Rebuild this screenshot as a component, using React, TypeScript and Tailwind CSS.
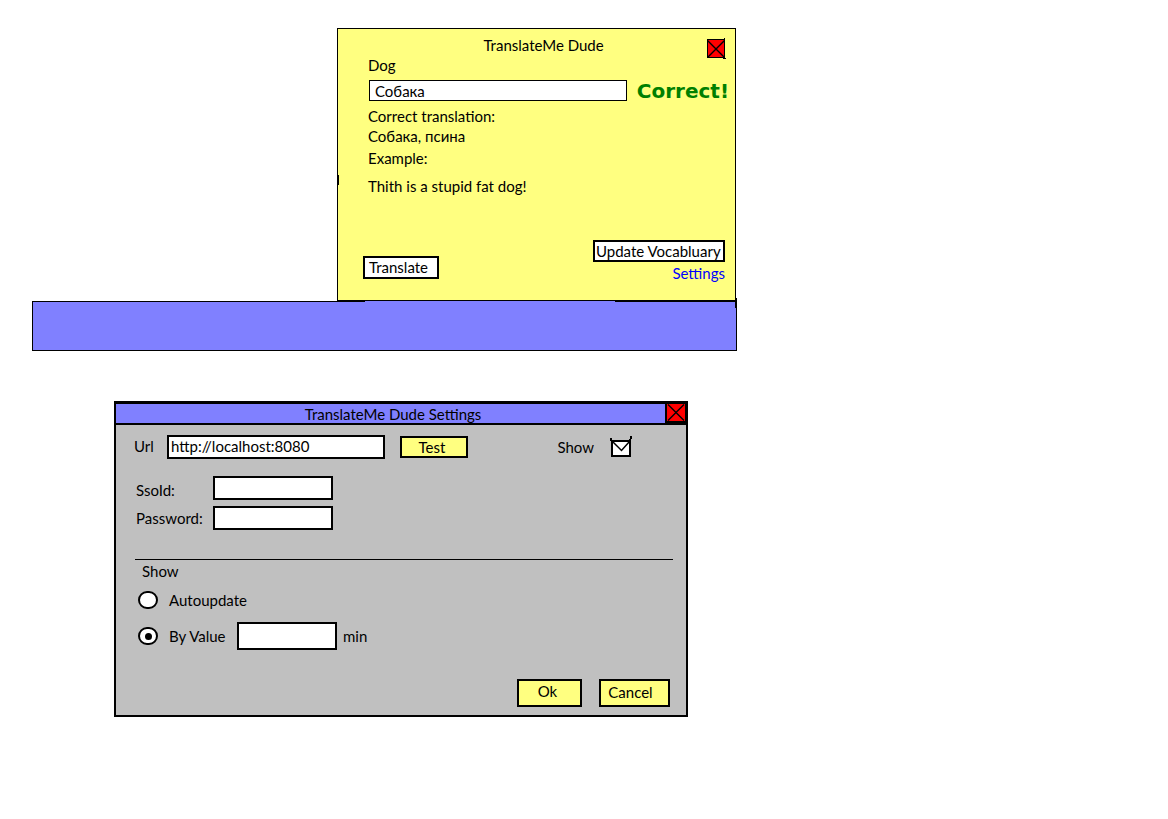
import { useState } from "react";
import type { ReactNode } from "react";

function CloseButton({ label, framed }: { label: string; framed?: boolean }) {
  return (
    <button type="button" aria-label={label} className="block shrink-0">
      {framed ? (
        <svg width="21" height="20" viewBox="0 0 21 20" className="block">
          <rect width="21" height="20" fill="#000" />
          <rect x="2" y="1" width="18" height="17" fill="#f00" />
          <path d="M3 1.5l16 16M19 1.5l-16 16" stroke="#000" strokeWidth="1.4" />
        </svg>
      ) : (
        <svg width="19" height="21" viewBox="0 0 19 21" className="block">
          <rect x="0.5" y="1.5" width="17" height="18" fill="#f00" stroke="#000" />
          <path d="M0.5 2.5l17 17M17.5 2.5l-17 17" stroke="#000" strokeWidth="1.4" />
          <path d="M17.5 0v21M16 20.5h3" stroke="#000" />
        </svg>
      )}
    </button>
  );
}

function Popup() {
  return (
    <section className="relative ml-auto flex w-full max-w-[399px] flex-col border border-black bg-[#ffff80] pt-[7px] pb-[18px]">
      <span className="absolute top-[146px] -left-px h-[10px] w-[2px] bg-black" />
      <header className="relative flex h-5 justify-center pl-[14px]">
        <h1>TranslateMe Dude</h1>
        <div className="absolute top-[2px] right-[9px]">
          <CloseButton label="Close" />
        </div>
      </header>
      <div className="flex flex-col pr-[6px] pl-[30px]">
        <label htmlFor="answer" className="h-6">
          Dog
        </label>
        <div className="flex items-center gap-[10px] pl-px">
          <input
            id="answer"
            defaultValue="Собака"
            className="h-[21px] min-w-0 flex-1 border border-black bg-white px-[5px] outline-none"
          />
          <output
            htmlFor="answer"
            className="font-['DejaVu_Sans',sans-serif] text-[20px] font-bold text-[#008000]"
          >
            Correct!
          </output>
        </div>
        <p className="mt-[6px]">Correct translation:</p>
        <p className="mt-[2px]">Собака, псина</p>
        <p className="mt-1">Example:</p>
        <p className="mt-[10px]">Thith is a stupid fat dog!</p>
      </div>
      <footer className="mt-[45px] flex items-center justify-between pr-[10px] pl-[25px]">
        <button
          type="button"
          className="mt-3 h-[23px] w-[76px] border-2 border-black bg-white px-1 text-left"
        >
          Translate
        </button>
        <div className="flex flex-col items-end gap-[2px]">
          <button
            type="button"
            className="h-[22px] w-[132px] border-2 border-black bg-white pl-px text-left whitespace-nowrap"
          >
            Update Vocabluary
          </button>
          <a href="#settings" className="text-[#0000ff]">
            Settings
          </a>
        </div>
      </footer>
    </section>
  );
}

function Taskbar() {
  return (
    <div className="relative h-[50px] border border-black bg-[#8080ff]">
      <span className="absolute -top-px right-[121px] h-px w-[250px] bg-[#8080ff]" />
      <span className="absolute -top-1 -right-px h-[10px] w-[2px] bg-black" />
    </div>
  );
}

function PanelButton({ className, children }: { className: string; children: ReactNode }) {
  return (
    <button type="button" className={`border-2 border-black bg-[#ffff80] ${className}`}>
      {children}
    </button>
  );
}

function ShowToggle() {
  return (
    <label className="flex items-center gap-4">
      Show
      <span className="relative block h-[22px] w-[22px]">
        <input type="checkbox" defaultChecked className="peer absolute inset-0 appearance-none" />
        <svg viewBox="0 0 22 22" className="pointer-events-none absolute inset-0 h-full w-full">
          <rect x="2" y="5" width="18" height="15" fill="#fff" stroke="#000" strokeWidth="2" />
        </svg>
        <svg
          viewBox="0 0 22 22"
          className="pointer-events-none invisible absolute inset-0 h-full w-full peer-checked:visible"
        >
          <path d="M2.5 5.5l9 9 8-9" fill="none" stroke="#000" strokeWidth="1.5" />
          <path d="M0 2h2v3h-2zM19 3h1v-3h2v3h-1v2h-2z" fill="#000" />
        </svg>
      </span>
    </label>
  );
}

function Radio({ id, checked, onSelect }: { id: string; checked: boolean; onSelect: () => void }) {
  return (
    <span className="relative block h-[18px] w-5">
      <input
        id={id}
        type="radio"
        name="mode"
        checked={checked}
        onChange={onSelect}
        className="peer absolute inset-0 appearance-none rounded-full border-2 border-black bg-white"
      />
      <span className="pointer-events-none invisible absolute top-[6px] left-[7px] size-[7px] rounded-full bg-black peer-checked:visible" />
    </span>
  );
}

function Settings() {
  const [mode, setMode] = useState("value");
  const field = "border-2 border-black bg-white px-[2px] outline-none";
  return (
    <section id="settings" className="w-full max-w-[574px] border-2 border-black bg-[#c0c0c0]">
      <header className="relative flex h-[22px] items-center justify-center border-t border-b-2 border-black bg-[#8080ff] pr-4">
        <h2>TranslateMe Dude Settings</h2>
        <div className="absolute -top-px right-0">
          <CloseButton label="Close settings" framed />
        </div>
      </header>
      <form className="px-[13px] pt-[10px] pb-2" onSubmit={(e) => e.preventDefault()}>
        <div className="flex items-center pr-[41px] pl-[5px]">
          <label htmlFor="url" className="w-[33px] pb-[2px]">
            Url
          </label>
          <input
            id="url"
            defaultValue="http://localhost:8080"
            className={`h-6 w-[218px] pb-[2px] ${field}`}
          />
          <PanelButton className="ml-[15px] h-[22px] w-[68px] pr-1">Test</PanelButton>
          <div className="ml-auto">
            <ShowToggle />
          </div>
        </div>
        <div className="mt-[17px] grid grid-cols-[77px_120px] items-center gap-y-[6px] pl-[7px]">
          <label htmlFor="sso" className="pt-1">
            SsoId:
          </label>
          <input id="sso" className={`h-6 ${field}`} />
          <label htmlFor="password">Password:</label>
          <input id="password" type="password" className={`h-6 ${field}`} />
        </div>
        <fieldset className="mt-[29px]">
          <div className="ml-[6px] border-t border-black pt-[2px] pl-[7px]">
            <legend>Show</legend>
          </div>
          <div className="mt-[11px] flex items-center gap-[11px] pl-[9px]">
            <Radio id="auto" checked={mode === "auto"} onSelect={() => setMode("auto")} />
            <label htmlFor="auto">Autoupdate</label>
          </div>
          <div className="mt-[13px] flex items-center pl-[9px]">
            <Radio id="value" checked={mode === "value"} onSelect={() => setMode("value")} />
            <label htmlFor="value" className="ml-[11px] w-[68px]">
              By Value
            </label>
            <input id="minutes" aria-label="Minutes" className={`h-7 w-[100px] ${field}`} />
            <label htmlFor="minutes" className="ml-[6px]">
              min
            </label>
          </div>
        </fieldset>
        <div className="mt-[29px] flex justify-end gap-[17px] pr-[3px]">
          <PanelButton className="h-7 w-[65px] pr-1 pb-1">Ok</PanelButton>
          <PanelButton className="h-7 w-[71px] pr-2 pb-[2px]">Cancel</PanelButton>
        </div>
      </form>
    </section>
  );
}

export default function App() {
  return (
    <main className="min-h-screen bg-white px-8 py-7 font-['Lato',sans-serif] text-[15px] leading-[18px] text-black">
      <div className="w-full max-w-[705px]">
        <div className="pr-px">
          <Popup />
        </div>
        <Taskbar />
      </div>
      <div className="mt-[50px] pl-[82px]">
        <Settings />
      </div>
    </main>
  );
}
